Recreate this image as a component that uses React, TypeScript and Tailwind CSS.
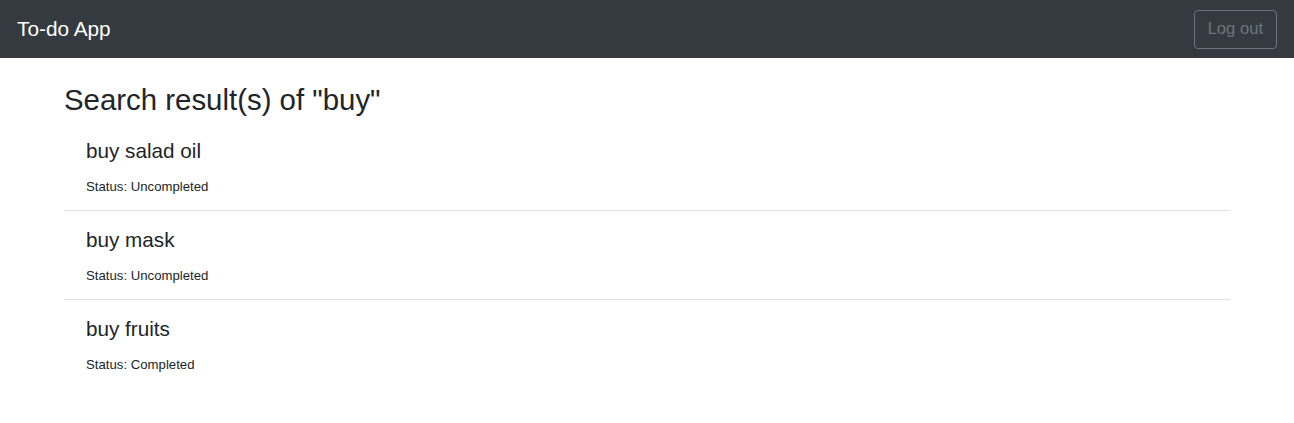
const results = [
    { title: "buy salad oil", completed: false },
    { title: "buy mask", completed: false },
    { title: "buy fruits", completed: true },
];

const App = () => {
    return (
        <div className="min-h-screen bg-white text-[#212529] font-['Liberation_Sans',Arial,sans-serif]">
            <nav className="h-[58px] bg-[#343a40] flex items-center justify-between px-[17px]">
                <span className="text-[20.8px] leading-[30px] text-white">To-do App</span>
                <button className="h-[39px] px-[13px] text-[16.6px] text-[#6c757d] border border-[#6c757d] rounded-[4px]">
                    Log out
                </button>
            </nav>

            <main className="mx-[64px] pt-[25px]">
                <h3 className="text-[29.4px] leading-[34px] mb-[5px]">Search result(s) of "buy"</h3>
                <ul>
                    {results.map((item, i) => (
                        <li
                            key={item.title}
                            className={`px-[22px] pt-[17px] pb-[13px] ${i < results.length - 1 ? "border-b border-[#dee2e6]" : ""}`}
                        >
                            <h5 className="text-[20.7px] leading-[24px] mb-[14px]">{item.title}</h5>
                            <p className="text-[13.2px] leading-[20px]">
                                Status: {item.completed ? "Completed" : "Uncompleted"}
                            </p>
                        </li>
                    ))}
                </ul>
            </main>
        </div>
    );
};

export default App;
